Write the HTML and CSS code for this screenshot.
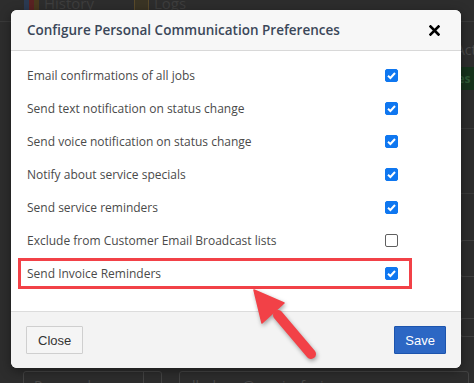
FILE: index.html
```html
<!DOCTYPE html>
<html lang="en">

<head>
    <meta charset="UTF-8">
    <title>Communication Preferences</title>
    <link rel="stylesheet" href="styles.css">
</head>

<body>
    <div class="page">
        <div class="tabs">
            <span class="tab"><span class="tab__icon tab__icon--chart"></span>History</span>
            <span class="tab"><span class="tab__icon tab__icon--mail"></span>Logs</span>
        </div>
        <div class="page__side">
            <div class="side__label">Active</div>
            <div class="side__btn">Yes</div>
            <div class="side__line"></div>
            <div class="side__line"></div>
            <div class="side__box"></div>
            <div class="side__box side__box--small"></div>
        </div>
        <div class="page__form">
            <div class="field field--select">
                <span>Personal</span>
                <span class="field__caret"></span>
            </div>
            <div class="field field--email">dbobrov@servicefusion.com</div>
        </div>
    </div>

    <div class="modal">
        <div class="modal__header">
            <div class="modal__title">Configure Personal Communication Preferences</div>
            <svg class="modal__close" width="11" height="11" viewBox="0 0 11 11">
                <path d="M1.5 1.5 L9.5 9.5 M9.5 1.5 L1.5 9.5" stroke="#000" stroke-width="2.6" stroke-linecap="square" />
            </svg>
        </div>
        <div class="modal__body">
            <label class="pref"><span>Email confirmations of all jobs</span><input type="checkbox" checked></label>
            <label class="pref"><span>Send text notification on status change</span><input type="checkbox" checked></label>
            <label class="pref"><span>Send voice notification on status change</span><input type="checkbox" checked></label>
            <label class="pref"><span>Notify about service specials</span><input type="checkbox" checked></label>
            <label class="pref"><span>Send service reminders</span><input type="checkbox" checked></label>
            <label class="pref"><span>Exclude from Customer Email Broadcast lists</span><input type="checkbox"></label>
            <label class="pref pref--marked"><span>Send Invoice Reminders</span><input type="checkbox" checked></label>
        </div>
        <div class="modal__footer">
            <button class="btn">Close</button>
            <button class="btn btn--primary">Save</button>
        </div>
    </div>

    <svg class="arrow" width="80" height="80" viewBox="0 0 80 80">
        <path d="M27 27 L60 66" stroke="#f24147" stroke-width="10" stroke-linecap="round" />
        <polygon points="3,2 33,15 11,35" fill="#f24147" stroke="#f24147" stroke-width="1.5" stroke-linejoin="round" />
    </svg>
</body>

</html>
```

FILE: styles.css
```css
* {
    box-sizing: border-box;
}

html,
body {
    width: 100%;
    height: 100%;
}

body {
    margin: 0;
    padding: 0;
    overflow: hidden;
    font-family: 'Open Sans', sans-serif;
    background-color: #2d2d2d;
}

/* dimmed page behind the dialog */
.page {
    position: relative;
    height: 100%;
}

.tabs {
    display: flex;
    gap: 40px;
    padding-left: 24px;
    height: 22px;
    border-bottom: 1px solid #3a3a3a;
    font-size: 15px;
    line-height: 14px;
    color: #3e3e3e;
    overflow: hidden;
}

.tab {
    display: flex;
    align-items: flex-start;
    gap: 5px;
    margin-top: -4px;
}

.tab__icon {
    width: 15px;
    height: 14px;
    margin-top: 2px;
}

.tab__icon--chart {
    background: linear-gradient(90deg, #2b3a52 0 33%, #5a2222 33% 66%, #4a3a1e 66%);
}

.tab__icon--mail {
    border: 1px solid #5a4a2a;
    background-color: #3a3424;
}

.page__side {
    position: absolute;
    right: 0;
    top: 40px;
    width: 14px;
    display: flex;
    flex-direction: column;
}

.side__label {
    font-size: 14px;
    color: #4a4a4a;
    margin-left: -4px;
    height: 18px;
    overflow: hidden;
}

.side__btn {
    margin-top: 9px;
    height: 23px;
    background-color: #16331c;
    color: #2e5a36;
    font-size: 12px;
    font-weight: 700;
    line-height: 23px;
    margin-left: -10px;
}

.side__line {
    height: 1px;
    background-color: #3a3a3a;
    margin-top: 38px;
}

.side__line + .side__line {
    margin-top: 64px;
}

.side__box {
    margin-top: 46px;
    height: 37px;
    border: 1px solid #404040;
    border-right: 0;
    border-radius: 3px 0 0 3px;
}

.side__box--small {
    margin-top: 41px;
    height: 19px;
}

.page__form {
    position: absolute;
    left: 23px;
    top: 371px;
    display: flex;
    gap: 15px;
}

.field {
    height: 30px;
    border: 1px solid #444;
    border-radius: 3px;
    font-size: 14px;
    color: #4a4a4a;
    padding: 4px 10px;
}

.field--select {
    width: 139px;
    display: flex;
    justify-content: space-between;
    padding-right: 0;
}

.field__caret {
    width: 18px;
    border-left: 1px solid #444;
    margin-top: -4px;
}

.field--email {
    width: 290px;
    padding-left: 7px;
    margin-left: 2px;
}

/* dialog */
.modal {
    position: absolute;
    left: 11px;
    top: 10px;
    width: 450px;
    background-color: #fff;
    border-radius: 6px;
    overflow: hidden;
    box-shadow: 0 3px 12px rgb(0 0 0 / 40%);
}

.modal__header {
    height: 41px;
    background-color: #f7f7f7;
    border-bottom: 1px solid #d8d8d8;
    display: flex;
    align-items: center;
    justify-content: space-between;
    padding: 0 21px 0 16px;
}

.modal__title {
    font-size: 13.5px;
    font-weight: 600;
    color: #3b4759;
}

.modal__close {
    display: block;
}

.modal__body {
    padding: 9px 0 22px;
    display: flex;
    flex-direction: column;
    gap: 2px;
}

.pref {
    height: 31px;
    margin: 0 49px 0 7px;
    padding: 0 9px 0 6px;
    border: 3px solid transparent;
    display: flex;
    align-items: center;
    justify-content: space-between;
    font-size: 12px;
    color: #4a4a4a;
}

.pref--marked {
    border-color: #f24147;
}

.pref input {
    appearance: none;
    width: 13px;
    height: 13px;
    margin: 0 2px 0 0;
    border: 1px solid #5f5f5f;
    border-radius: 2px;
    background-color: #fff;
}

.pref input:checked {
    border-color: #0f77f0;
    background: #0f77f0 url("data:image/svg+xml;utf8,<svg xmlns='http://www.w3.org/2000/svg' viewBox='0 0 13 13'><path d='M3 6.8 L5.4 9 L10 4' fill='none' stroke='white' stroke-width='2'/></svg>") center / 13px 13px no-repeat;
}

.modal__footer {
    border-top: 1px solid #dcdcdc;
    background-color: #f3f3f3;
    height: 57px;
    display: flex;
    align-items: center;
    justify-content: space-between;
    padding: 0 15px;
}

.btn {
    height: 28px;
    padding: 0 11px;
    font-family: 'Liberation Sans', Arial, sans-serif;
    font-size: 13px;
    color: #333;
    background-color: #f5f5f5;
    border: 1px solid #cfcfcf;
    border-radius: 1px;
}

.btn--primary {
    color: #fff;
    background-color: #2c67c4;
    border-color: #1c54ad;
    padding: 0 10px;
}

/* annotation arrow */
.arrow {
    position: absolute;
    left: 251px;
    top: 288px;
    filter: drop-shadow(1px 2px 2px rgb(0 0 0 / 35%));
}
```
